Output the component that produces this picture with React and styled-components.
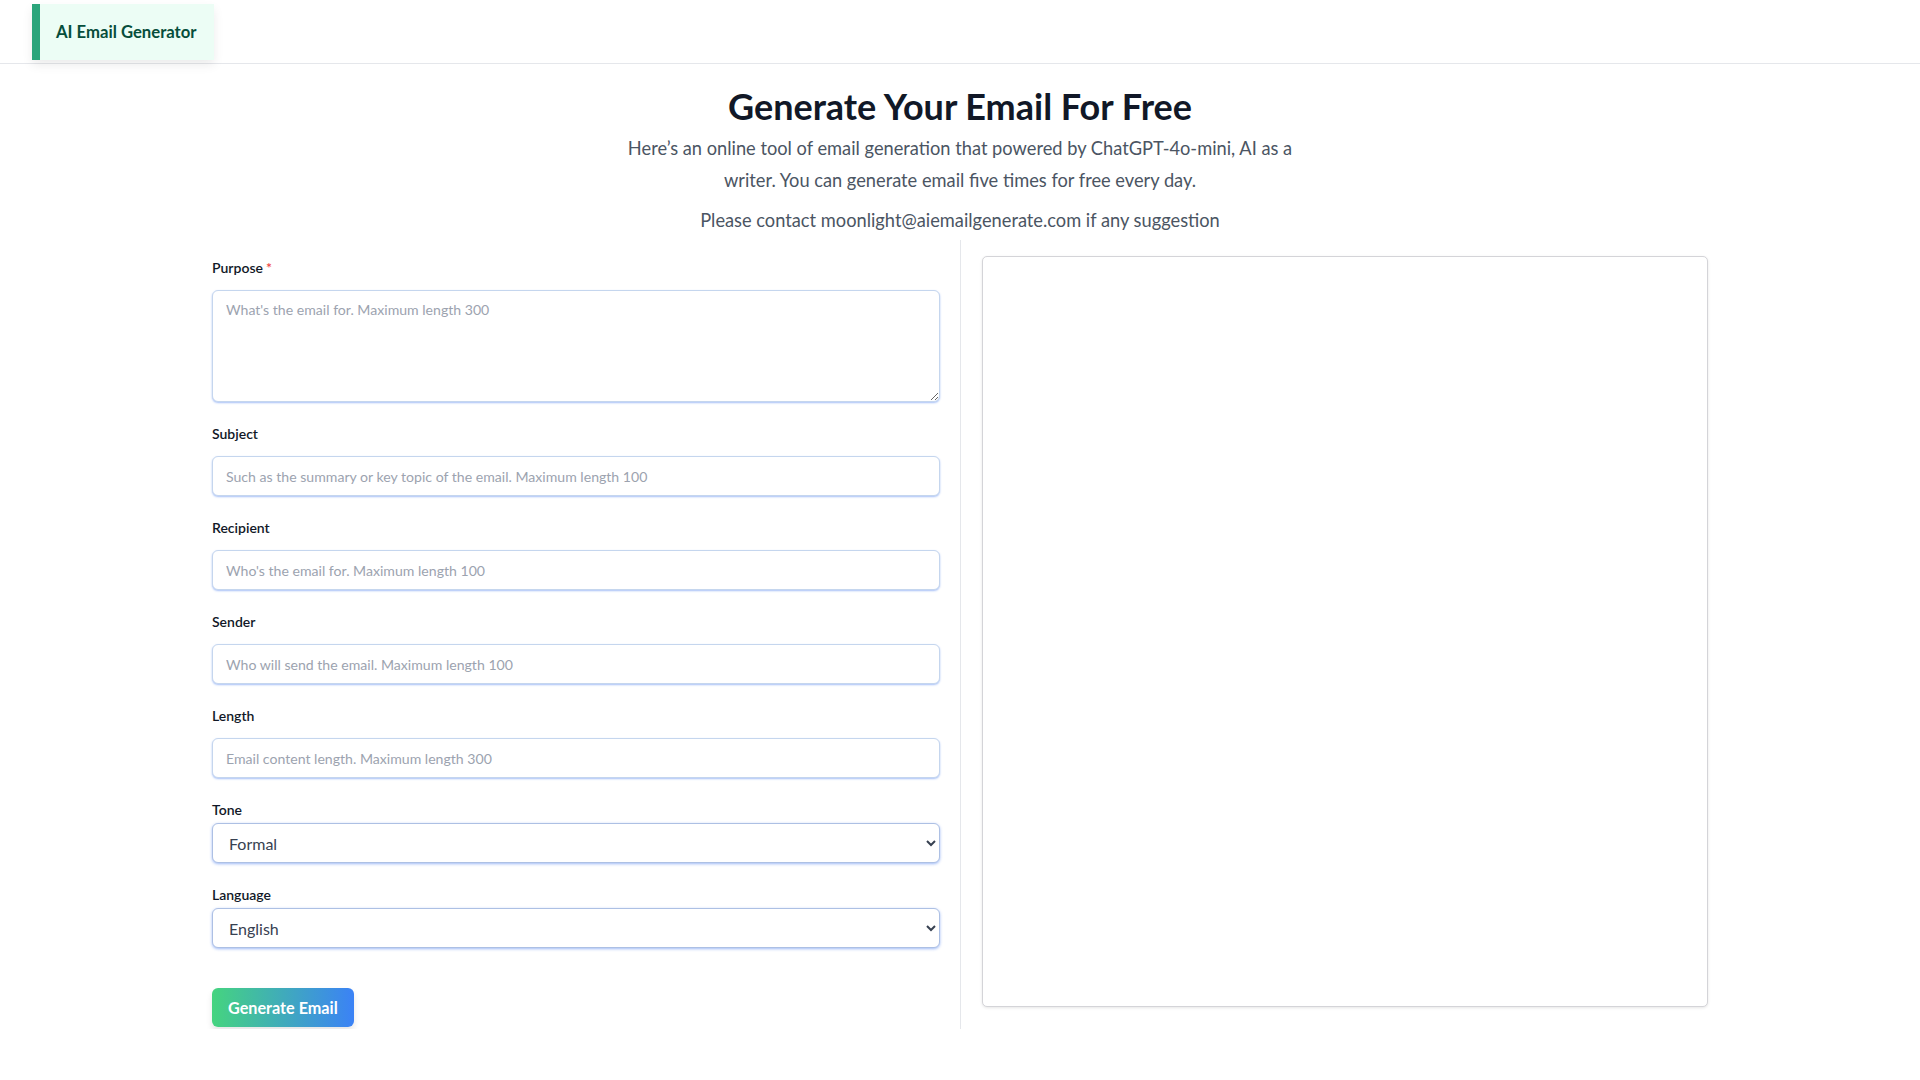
import React from 'react';
import styled, { createGlobalStyle } from 'styled-components';

const Global = createGlobalStyle`
  * { box-sizing: border-box; }
  body {
    margin: 0;
    background: #ffffff;
    color: #111827;
    font-family: Lato, "Noto Sans", "Liberation Sans", sans-serif;
  }
`;

const Header = styled.header`
  height: 64px;
  border-bottom: 1px solid #e5e7eb;
  display: flex;
  align-items: flex-start;
  padding: 4px 32px 0;
`;

const Logo = styled.a`
  display: flex;
  align-items: center;
  height: 56px;
  padding: 0 17px 0 16px;
  border-left: 8px solid #2ba57b;
  background: #ecfdf5;
  color: #064e3b;
  font-size: 16.7px;
  font-weight: 700;
  text-decoration: none;
  box-shadow: 0 5px 10px rgba(0, 0, 0, 0.08);
`;

const Hero = styled.section`
  text-align: center;
  padding-top: 22px;
`;

const Title = styled.h1`
  margin: 0;
  font-size: 36px;
  line-height: 40px;
  font-weight: 700;
  color: #111827;
`;

const Intro = styled.p`
  margin: 6px auto 0;
  max-width: 672px;
  font-size: 18.25px;
  line-height: 32px;
  color: #4b5563;
`;

const Contact = styled.p`
  margin: 8px 0 0;
  font-size: 18.25px;
  line-height: 32px;
  color: #4b5563;
`;

const Workspace = styled.main`
  max-width: 1536px;
  margin: 4px auto 0;
  padding: 0 20px;
  display: grid;
  grid-template-columns: 1fr 1fr;
`;

const FormColumn = styled.form`
  padding: 18px 20px 2px 0;
`;

const OutputColumn = styled.section`
  border-left: 1px solid #e5e7eb;
  padding: 16px 0 22px 21px;
`;

const Field = styled.div`
  margin-bottom: 22px;
`;

const Label = styled.label`
  display: block;
  font-size: 14px;
  line-height: 20px;
  font-weight: 600;
  color: #111827;
  margin-bottom: ${(p) => (p.$compact ? '3px' : '12px')};
`;

const Required = styled.span`
  color: #ef4444;
  margin-left: 3px;
`;

const fieldBase = `
  display: block;
  width: 100%;
  border: 1px solid #c5d6ee;
  border-radius: 6px;
  box-shadow: 0 1px 2px rgba(37, 99, 235, 0.4);
  background: #ffffff;
  font-family: Lato, "Noto Sans", "Liberation Sans", sans-serif;
  font-size: 14.1px;
  color: #374151;
  outline: none;
  &::placeholder { color: #9ca3af; }
`;

const TextInput = styled.input`
  ${fieldBase}
  height: 40px;
  padding: 0 13px;
`;

const TextArea = styled.textarea`
  ${fieldBase}
  height: 112px;
  padding: 9px 13px;
  line-height: 20px;
  resize: vertical;
`;

const Select = styled.select`
  ${fieldBase}
  height: 40px;
  padding: 0 10px 0 12px;
  font-size: 16px;
  border-color: #adc0e4;
  box-shadow: 0 1px 3px rgba(37, 99, 235, 0.45);
`;

const GenerateButton = styled.button`
  margin-top: 18px;
  height: 39px;
  padding: 0 16px;
  border: none;
  border-radius: 6px;
  background: linear-gradient(90deg, #45d47f, #3b82f6);
  color: #ffffff;
  font-family: Lato, "Noto Sans", "Liberation Sans", sans-serif;
  font-size: 16.2px;
  font-weight: 700;
  box-shadow: 0 4px 6px rgba(0, 0, 0, 0.1);
  cursor: pointer;
`;

const OutputBox = styled.div`
  height: 751px;
  border: 1px solid #d4d4d8;
  border-radius: 5px;
  background: #ffffff;
  box-shadow: 0 1px 3px rgba(0, 0, 0, 0.1);
`;

const textFields = [
  { name: 'Subject', placeholder: 'Such as the summary or key topic of the email. Maximum length 100' },
  { name: 'Recipient', placeholder: "Who's the email for. Maximum length 100" },
  { name: 'Sender', placeholder: 'Who will send the email. Maximum length 100' },
  { name: 'Length', placeholder: 'Email content length. Maximum length 300' },
];

export default function App() {
  return (
    <>
      <Global />
      <Header>
        <Logo href="#">AI Email Generator</Logo>
      </Header>
      <Hero>
        <Title>Generate Your Email For Free</Title>
        <Intro>
          Here’s an online tool of email generation that powered by ChatGPT-4o-mini, AI as a writer. You can
          generate email five times for free every day.
        </Intro>
        <Contact>Please contact moonlight@aiemailgenerate.com if any suggestion</Contact>
      </Hero>
      <Workspace>
        <FormColumn onSubmit={(e) => e.preventDefault()}>
          <Field>
            <Label>
              Purpose<Required>*</Required>
            </Label>
            <TextArea placeholder="What's the email for. Maximum length 300" />
          </Field>
          {textFields.map((f) => (
            <Field key={f.name}>
              <Label>{f.name}</Label>
              <TextInput placeholder={f.placeholder} />
            </Field>
          ))}
          <Field>
            <Label $compact>Tone</Label>
            <Select defaultValue="Formal">
              <option>Formal</option>
              <option>Casual</option>
              <option>Friendly</option>
            </Select>
          </Field>
          <Field>
            <Label $compact>Language</Label>
            <Select defaultValue="English">
              <option>English</option>
              <option>中文</option>
              <option>Español</option>
            </Select>
          </Field>
          <GenerateButton type="submit">Generate Email</GenerateButton>
        </FormColumn>
        <OutputColumn>
          <OutputBox />
        </OutputColumn>
      </Workspace>
    </>
  );
}
